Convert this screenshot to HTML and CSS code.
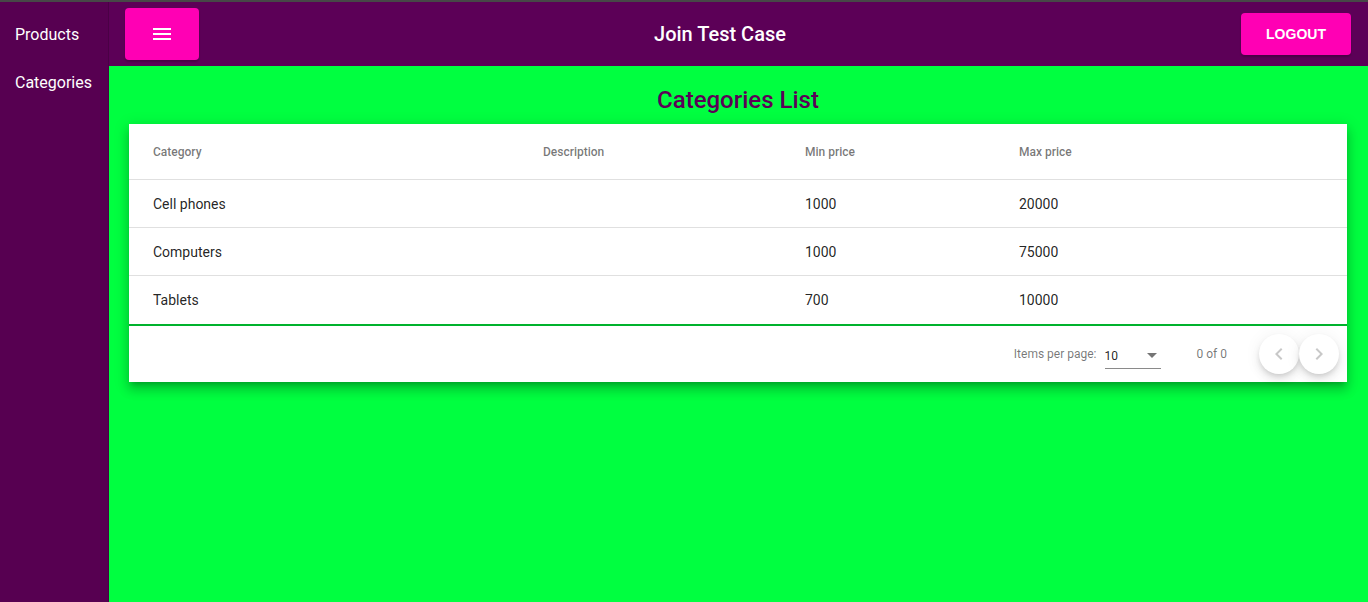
FILE: index.html
```html
<!DOCTYPE html>
<html>
<head>
<meta charset="utf-8">
<link rel="stylesheet" href="styles.css">
</head>
<body>
<div class="app">
  <nav class="sidenav">
    <a class="nav-item">Products</a>
    <a class="nav-item">Categories</a>
  </nav>
  <div class="content">
    <header class="toolbar">
      <button class="menu-btn" aria-label="menu">
        <svg width="18" height="12" viewBox="0 0 18 12"><rect x="0" y="0" width="18" height="2" fill="#fff"/><rect x="0" y="5" width="18" height="2" fill="#fff"/><rect x="0" y="10" width="18" height="2" fill="#fff"/></svg>
      </button>
      <div class="title">Join Test Case</div>
      <button class="logout-btn">LOGOUT</button>
    </header>
    <main class="main">
      <h1 class="page-title">Categories List</h1>
      <div class="card">
        <table class="table">
          <thead>
            <tr><th class="c1">Category</th><th class="c2">Description</th><th class="c3">Min price</th><th class="c4">Max price</th></tr>
          </thead>
          <tbody>
            <tr><td>Cell phones</td><td></td><td>1000</td><td>20000</td></tr>
            <tr><td>Computers</td><td></td><td>1000</td><td>75000</td></tr>
            <tr class="last"><td>Tablets</td><td></td><td>700</td><td>10000</td></tr>
          </tbody>
        </table>
        <div class="paginator">
          <span class="ipp">Items per page:</span>
          <div class="select"><span>10</span><span class="arrow"></span></div>
          <span class="range">0 of 0</span>
          <div class="pg-btns">
            <button class="pg-btn" aria-label="previous"><svg width="24" height="24" viewBox="0 0 24 24"><path d="M15.41 7.41L14 6l-6 6 6 6 1.41-1.41L10.83 12z" fill="#c8c8c8"/></svg></button>
            <button class="pg-btn" aria-label="next"><svg width="24" height="24" viewBox="0 0 24 24"><path d="M10 6L8.59 7.41 13.17 12l-4.58 4.59L10 18l6-6z" fill="#c8c8c8"/></svg></button>
          </div>
        </div>
      </div>
    </main>
  </div>
</div>
</body>
</html>
```

FILE: styles.css
```css
* { box-sizing: border-box; }
html, body { margin: 0; height: 100%; }
body {
  font-family: Roboto, "Helvetica Neue", sans-serif;
  border-top: 2px solid #474747;
  background: #5a0053;
  overflow: hidden;
}
.app { display: flex; height: 100%; }
.sidenav {
  width: 109px;
  flex: none;
  background: #570051;
  border-right: 1px solid #4a0045;
  padding-top: 8px;
  display: flex;
  flex-direction: column;
}
.nav-item {
  height: 48px;
  display: flex;
  align-items: center;
  padding-left: 15px;
  color: #fff;
  font-size: 16px;
}
.content { flex: 1; display: flex; flex-direction: column; min-width: 0; }
.toolbar {
  height: 64px;
  flex: none;
  background: #5c0057;
  display: flex;
  align-items: center;
  justify-content: space-between;
  padding: 0 17px 0 16px;
}
.menu-btn {
  width: 74px; height: 52px;
  border: none; border-radius: 4px;
  background: #ff00b4;
  display: flex; align-items: center; justify-content: center;
  box-shadow: 0 2px 2px rgba(0,0,0,.2);
}
.title {
  color: #fff; font-size: 20px; font-weight: 500;
}
.logout-btn {
  width: 110px; height: 42px;
  border: none; border-radius: 4px;
  background: #ff00b4;
  color: #fff;
  font-family: "Liberation Sans", Arial, sans-serif;
  font-weight: 700; font-size: 14px;
  box-shadow: 0 2px 2px rgba(0,0,0,.2);
}
.main {
  flex: 1;
  background: #00ff40;
  padding: 0 21px 0 20px;
}
.page-title {
  margin: 0;
  height: 58px;
  display: flex; align-items: center; justify-content: center;
  padding-top: 10px;
  font-size: 24px; font-weight: 500;
  color: #5c0057;
}
.card {
  background: #fff;
  box-shadow: 0 5px 5px -3px rgba(0,0,0,.2), 0 8px 10px 1px rgba(0,0,0,.14), 0 3px 14px 2px rgba(0,0,0,.12);
}
.table { width: 100%; border-collapse: collapse; }
.table th {
  height: 55px;
  text-align: left;
  font-size: 12px; font-weight: 500;
  color: rgba(0,0,0,.54);
  border-bottom: 1px solid #e0e0e0;
  padding: 2px 0 0;
}
.table td {
  height: 48px;
  font-size: 14px;
  color: rgba(0,0,0,.87);
  border-bottom: 1px solid #e0e0e0;
  padding: 2px 0 0;
}
.table th:first-child, .table td:first-child { padding-left: 24px; }
.c1 { width: 414px; }
.c2 { width: 262px; }
.c3 { width: 214px; }
.table tr.last td { height: 50px; padding-top: 0; border-bottom: 2px solid #00b22d; }
.paginator {
  height: 56px;
  display: flex; align-items: center; justify-content: flex-end;
  padding-right: 8px;
  font-size: 12px;
  color: rgba(0,0,0,.54);
}
.select {
  width: 56px;
  margin-left: 8px;
  margin-right: 36px;
  border-bottom: 1px solid #8a8a8a;
  display: flex; align-items: center; justify-content: space-between;
  color: rgba(0,0,0,.87);
  padding-bottom: 5px;
  margin-top: 9px;
  font-size: 12px;
}
.arrow {
  width: 0; height: 0;
  border-left: 5px solid transparent;
  border-right: 5px solid transparent;
  border-top: 5px solid rgba(0,0,0,.54);
  margin-right: 4px;
}
.range { margin-right: 32px; }
.pg-btns { display: flex; }
.pg-btn {
  width: 40px; height: 40px;
  border: none; border-radius: 50%;
  background: #fff;
  display: flex; align-items: center; justify-content: center;
  box-shadow: 0 3px 5px -1px rgba(0,0,0,.12), 0 6px 10px 0 rgba(0,0,0,.08), 0 1px 18px 0 rgba(0,0,0,.06);
  padding: 0;
}
```
